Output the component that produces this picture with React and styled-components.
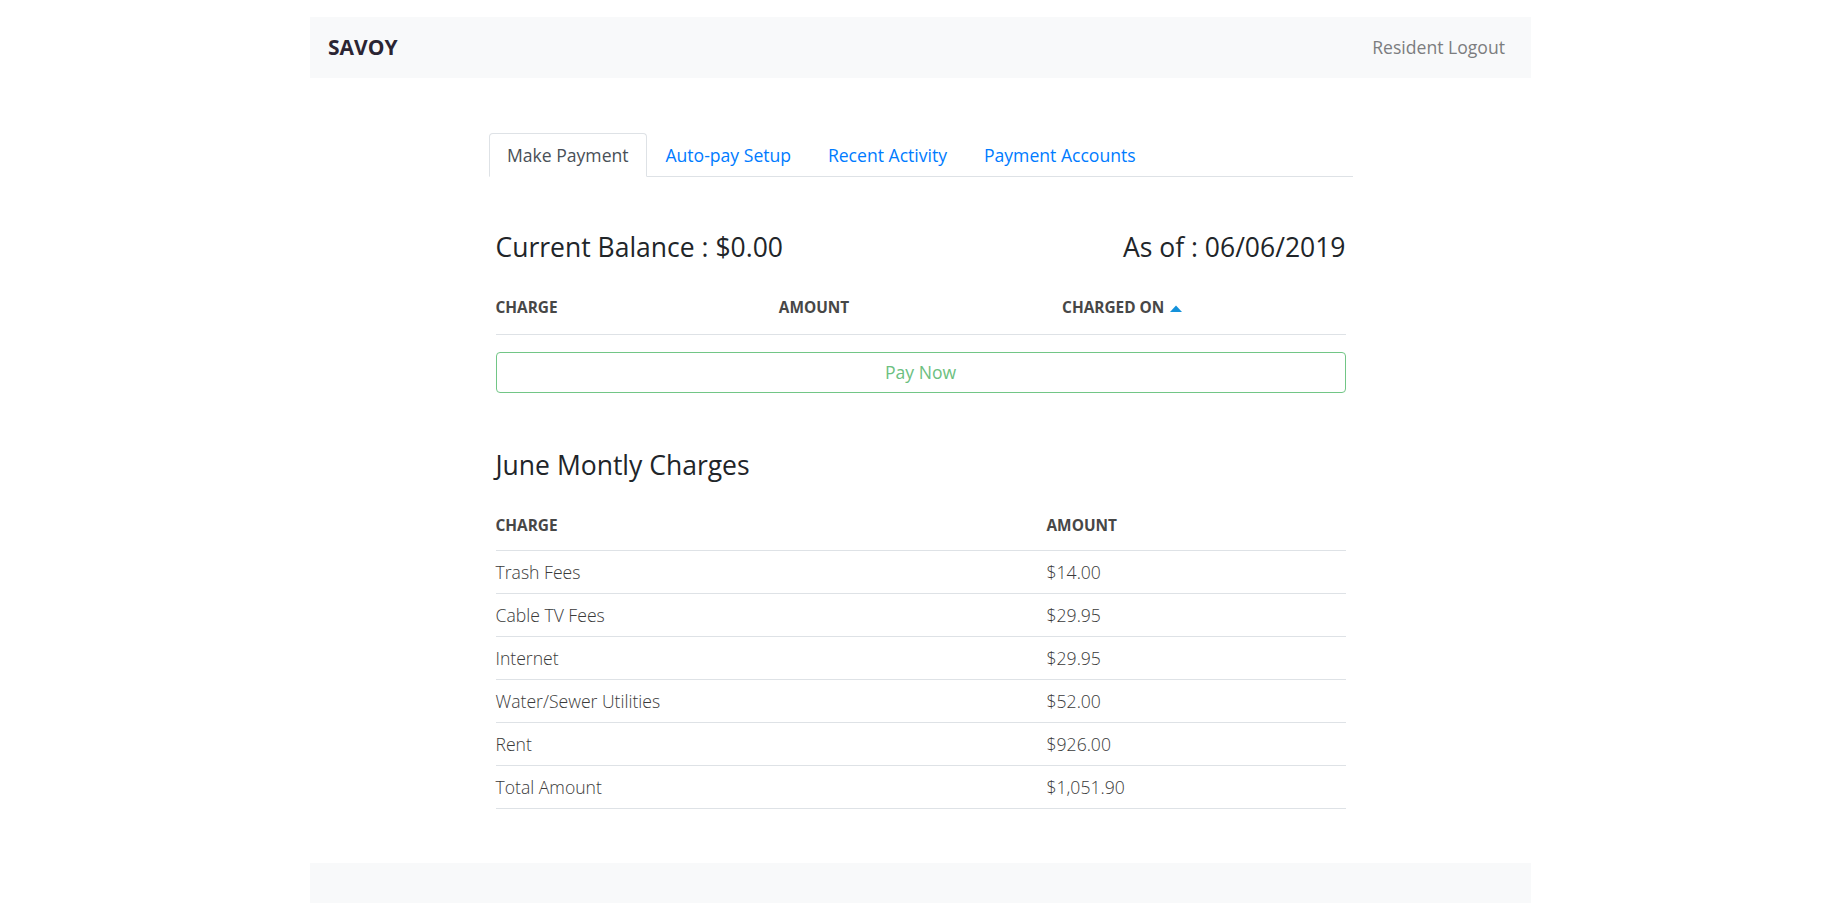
import styled, { createGlobalStyle } from "styled-components";

const GlobalStyle = createGlobalStyle`
  body {
    margin: 0;
    background: #fff;
    font-family: "Open Sans", "Liberation Sans", sans-serif;
    font-size: 17.6px;
    line-height: 1.5;
    color: #212529;
  }
`;

const tabs = ["Make Payment", "Auto-pay Setup", "Recent Activity", "Payment Accounts"];

const monthly = [
  ["Trash Fees", "$14.00"],
  ["Cable TV Fees", "$29.95"],
  ["Internet", "$29.95"],
  ["Water/Sewer Utilities", "$52.00"],
  ["Rent", "$926.00"],
  ["Total Amount", "$1,051.90"],
];

function SortUp() {
  return (
    <SortIcon width="12" height="7" viewBox="0 0 12 7">
      <polygon points="0,7 6,0.5 12,7" fill="#1491da" />
    </SortIcon>
  );
}

function App() {
  return (
    <>
      <GlobalStyle />
      <NavBar>
        <Brand>SAVOY</Brand>
        <NavLink>Resident Logout</NavLink>
      </NavBar>

      <Main>
        <TabList>
          {tabs.map((t, i) => (
            <Tab key={t} $active={i === 0}>
              {t}
            </Tab>
          ))}
        </TabList>

        <Content>
          <BalanceRow>
            <Heading>Current Balance : $0.00</Heading>
            <Heading>As of : 06/06/2019</Heading>
          </BalanceRow>

          <Table $top={19}>
            <thead>
              <tr>
                <Th style={{ width: "33.33%" }}>Charge</Th>
                <Th style={{ width: "33.33%" }}>Amount</Th>
                <Th>
                  Charged On
                  <SortUp />
                </Th>
              </tr>
            </thead>
          </Table>

          <PayButton>Pay Now</PayButton>

          <Heading $top={57}>June Montly Charges</Heading>

          <Table $top={18.5}>
            <thead>
              <tr>
                <Th $low style={{ width: "551px" }}>Charge</Th>
                <Th $low>Amount</Th>
              </tr>
            </thead>
            <tbody>
              {monthly.map(([name, amount]) => (
                <tr key={name}>
                  <Td>{name}</Td>
                  <Td>{amount}</Td>
                </tr>
              ))}
            </tbody>
          </Table>
        </Content>
      </Main>

      <Footer />
    </>
  );
}
export default App;

const NavBar = styled.nav`
  width: 1221px;
  height: 61px;
  margin: 17px auto 0;
  box-sizing: border-box;
  padding: 0 26px 0 18px;
  background: #f8f9fa;
  display: flex;
  align-items: center;
  justify-content: space-between;
`;
const Brand = styled.span`
  font-size: 21px;
  font-weight: 700;
  color: #2b2533;
`;
const NavLink = styled.span`
  font-size: 17.6px;
  color: #7c7d7f;
`;
const Main = styled.main`
  width: 864px;
  margin: 55px auto 0;
`;
const TabList = styled.ul`
  display: flex;
  list-style: none;
  margin: 0;
  padding: 0;
  border-bottom: 1px solid #dee2e6;
`;
const Tab = styled.li`
  margin-bottom: -1px;
  padding: 8px 17.4px;
  font-size: 17.6px;
  line-height: 26.4px;
  border: 1px solid ${(p) => (p.$active ? "#dee2e6" : "transparent")};
  border-bottom-color: ${(p) => (p.$active ? "#fff" : "transparent")};
  border-radius: 4px 4px 0 0;
  background: ${(p) => (p.$active ? "#fff" : "transparent")};
  color: ${(p) => (p.$active ? "#495057" : "#007bff")};
  cursor: pointer;
`;
const Content = styled.section`
  padding: 55px 7px 0;
`;
const BalanceRow = styled.div`
  display: flex;
  justify-content: space-between;
`;
const Heading = styled.h3`
  margin: ${(p) => p.$top || 0}px 0 0;
  font-size: 26.5px;
  line-height: 1.2;
  font-weight: 400;
  color: #212529;
`;
const Table = styled.table`
  width: 100%;
  margin-top: ${(p) => p.$top}px;
  border-collapse: collapse;
`;
const Th = styled.th`
  padding: ${(p) => (p.$low ? "13px 0 11px" : "12px 0")};
  text-align: left;
  font-size: 15.4px;
  line-height: 26.4px;
  font-weight: 700;
  text-transform: uppercase;
  color: #474747;
  border-bottom: 1px solid #dee2e6;
`;
const SortIcon = styled.svg`
  margin-left: 6px;
  vertical-align: 1px;
`;
const Td = styled.td`
  padding: 8px 0;
  font-size: 17.6px;
  line-height: 26px;
  font-weight: 300;
  color: #3a3a3a;
  border-bottom: 1px solid #dee2e6;
`;
const PayButton = styled.button`
  display: block;
  width: 100%;
  margin-top: 17.6px;
  padding: 6px 12px;
  font-family: inherit;
  font-size: 17.6px;
  line-height: 26.4px;
  color: #6cc080;
  background: #fff;
  border: 1px solid #72c686;
  border-radius: 4px;
  cursor: pointer;
`;
const Footer = styled.footer`
  width: 1221px;
  height: 80px;
  margin: 54px auto 0;
  background: #f8f9fa;
`;
